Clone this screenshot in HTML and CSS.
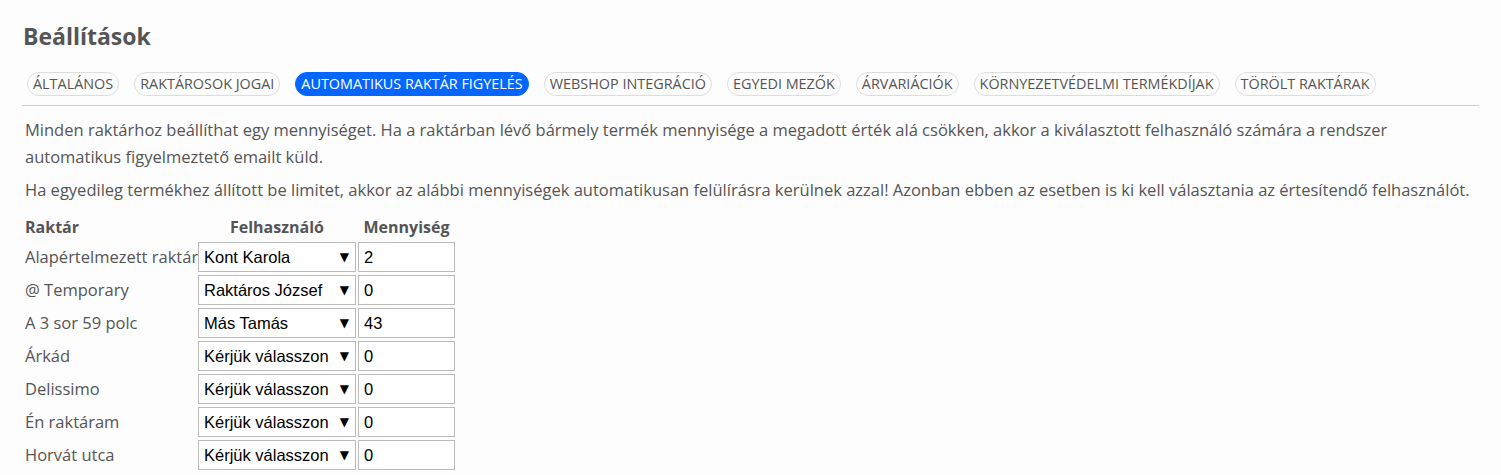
FILE: index.html
```html
<!DOCTYPE html>
<html lang="hu">
<head>
<meta charset="utf-8">
<title>Beállítások</title>
<link rel="stylesheet" href="styles.css">
</head>
<body>
<div class="page">
  <h1 class="title">Beállítások</h1>
  <nav class="tabs">
    <a class="tab">ÁLTALÁNOS</a>
    <a class="tab">RAKTÁROSOK JOGAI</a>
    <a class="tab active">AUTOMATIKUS RAKTÁR FIGYELÉS</a>
    <a class="tab">WEBSHOP INTEGRÁCIÓ</a>
    <a class="tab">EGYEDI MEZŐK</a>
    <a class="tab">ÁRVARIÁCIÓK</a>
    <a class="tab">KÖRNYEZETVÉDELMI TERMÉKDÍJAK</a>
    <a class="tab">TÖRÖLT RAKTÁRAK</a>
  </nav>
  <p class="text">Minden raktárhoz beállíthat egy mennyiséget. Ha a raktárban lévő bármely termék mennyisége a megadott érték alá csökken, akkor a kiválasztott felhasználó számára a rendszer automatikus figyelmeztető emailt küld.</p>
  <p class="text">Ha egyedileg termékhez állított be limitet, akkor az alábbi mennyiségek automatikusan felülírásra kerülnek azzal! Azonban ebben az esetben is ki kell választania az értesítendő felhasználót.</p>
  <div class="grid">
    <div class="th th-left">Raktár</div>
    <div class="th">Felhasználó</div>
    <div class="th">Mennyiség</div>

    <div class="label">Alapértelmezett raktár</div>
    <div class="sel"><select><option>Kont Karola</option></select><span class="arrow">▼</span></div>
    <input class="qty" type="text" value="2">

    <div class="label">@ Temporary</div>
    <div class="sel"><select><option>Raktáros József</option></select><span class="arrow">▼</span></div>
    <input class="qty" type="text" value="0">

    <div class="label">A 3 sor 59 polc</div>
    <div class="sel"><select><option>Más Tamás</option></select><span class="arrow">▼</span></div>
    <input class="qty" type="text" value="43">

    <div class="label">Árkád</div>
    <div class="sel"><select><option>Kérjük válasszon</option></select><span class="arrow">▼</span></div>
    <input class="qty" type="text" value="0">

    <div class="label">Delissimo</div>
    <div class="sel"><select><option>Kérjük válasszon</option></select><span class="arrow">▼</span></div>
    <input class="qty" type="text" value="0">

    <div class="label">Én raktáram</div>
    <div class="sel"><select><option>Kérjük válasszon</option></select><span class="arrow">▼</span></div>
    <input class="qty" type="text" value="0">

    <div class="label">Horvát utca</div>
    <div class="sel"><select><option>Kérjük válasszon</option></select><span class="arrow">▼</span></div>
    <input class="qty" type="text" value="0">
  </div>
</div>
</body>
</html>
```
FILE: styles.css
```css
html, body {
  margin: 0;
  padding: 0;
  background: #fdfdfd;
}
body {
  font-family: "Open Sans", "Noto Sans", sans-serif;
  color: #555;
  font-size: 16.5px;
}
.page {
  padding: 18px 22px 0 22px;
}
.title {
  margin: 0 0 0 1px;
  font-size: 23px;
  line-height: 36px;
  font-weight: 700;
  color: #555;
}
.tabs {
  display: flex;
  gap: 15px;
  margin-top: 18px;
  padding: 0 0 9px 5px;
  border-bottom: 1px solid #ccc;
  width: 1452px;
}
.tab {
  display: block;
  height: 22px;
  line-height: 22px;
  padding: 0 5px;
  border: 1px solid #ddd;
  border-radius: 12px;
  font-size: 14.4px;
  color: #555;
  white-space: nowrap;
}
.tab.active {
  background: #0566ff;
  border-color: #0566ff;
  color: #fff;
}
.text {
  margin: 10px 0 0 3px;
  line-height: 27px;
}
.text + .text {
  margin-top: 6px;
}
.grid {
  display: grid;
  grid-template-columns: 174px 158px 97px;
  column-gap: 2px;
  row-gap: 3px;
  margin-top: 12px;
}
.th {
  font-weight: 700;
  font-size: 16px;
  text-align: center;
  line-height: 24px;
}
.th-left {
  text-align: left;
  padding-left: 3px;
}
.label {
  padding-left: 3px;
  line-height: 30px;
  white-space: nowrap;
}
.sel {
  position: relative;
  height: 30px;
}
.sel select {
  appearance: none;
  -webkit-appearance: none;
  width: 100%;
  height: 30px;
  box-sizing: border-box;
  border: 1px solid #bbb;
  border-radius: 0;
  background: #fff;
  padding: 0 0 0 5px;
  margin: 0;
  font-family: "Liberation Sans", Arial, sans-serif;
  font-size: 16.5px;
  color: #000;
}
.arrow {
  position: absolute;
  right: 7px;
  top: 0;
  line-height: 30px;
  font-family: "DejaVu Sans", sans-serif;
  font-size: 12px;
  color: #000;
  pointer-events: none;
}
.qty {
  width: 97px;
  height: 30px;
  box-sizing: border-box;
  border: 1px solid #bbb;
  border-radius: 0;
  background: #fff;
  padding: 0 0 0 5px;
  margin: 0;
  font-family: "Liberation Sans", Arial, sans-serif;
  font-size: 16.5px;
  color: #000;
}
```
